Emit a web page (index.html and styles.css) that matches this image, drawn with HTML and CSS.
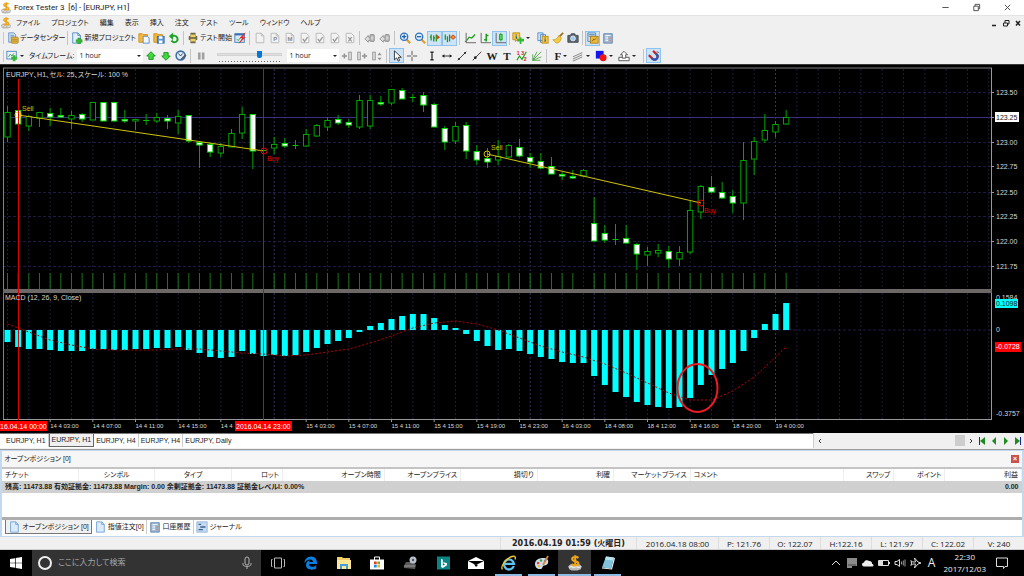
FILE: index.html
```html
<!DOCTYPE html>
<html lang="ja">
<head>
  <meta charset="UTF-8" />
  <meta name="viewport" content="width=device-width, initial-scale=1.0"/>
  <title>Forex Tester 3</title>
  <link rel="stylesheet" href="styles.css">
</head>
<body>

  <!-- Icones -->
  <svg class="sprite" aria-hidden="true">
    <symbol id="i-logo" viewBox="0 0 14 14">
      <path d="M1 10l2-2h8l2 2-1 2.500-3 1H4l-2-1z" fill="#b9b9b9"/>
      <path d="M2 11l2-1 2 1 2-1 2 1 2-1" stroke="#eee" fill="none"/>
      <path d="M10 2.500C8 1 4.500 1.500 4.500 3.500c0 2.500 5.500 1.500 5.500 4 0 2-4 2.200-6 .500M7.200 .300v9.500" stroke="#eba51c" stroke-width="1.800" fill="none"/>
    </symbol>
    <symbol id="i-data" viewBox="0 0 14 14">
      <path d="M2 1h6l2 2v9H2z" fill="#cfe2f5" stroke="#5f8fc4"/>
      <path d="M4 4h4M4 6h4" stroke="#5f8fc4"/>
      <rect x="5" y="6" width="8" height="7" rx="1" fill="#f0c24a" stroke="#a97b17"/>
      <path d="M6 8.500h6M6 10.500h6" stroke="#a97b17"/>
    </symbol>
    <symbol id="i-newproj" viewBox="0 0 14 14">
      <path d="M2 1h6l3 3v9H2z" fill="#e3effb" stroke="#4a86c5"/>
      <path d="M8 1v3h3" fill="none" stroke="#4a86c5"/>
      <path d="M8 7h3v2h2v3h-2v2H8v-2H6V9h2z" fill="#35b835" stroke="#1c8a1c" stroke-width=".5"/>
    </symbol>
    <symbol id="i-open" viewBox="0 0 14 14">
      <path d="M1 2h4l1 1h5v9H1z" fill="#f6b93b" stroke="#cd8b16"/>
      <path d="M6 5h5l2 2v6H6z" fill="#f5f9ff" stroke="#4a86c5"/>
    </symbol>
    <symbol id="i-save" viewBox="0 0 14 14">
      <path d="M1 2h4l1 1h5v9H1z" fill="#f6b93b" stroke="#cd8b16"/>
      <rect x="5" y="5" width="8" height="8" fill="#5d97d6" stroke="#2f67a8"/>
      <path d="M7 5h4v3H7zM7 10h4v3H7z" fill="#fff"/>
    </symbol>
    <symbol id="i-undo" viewBox="0 0 14 14">
      <path d="M3.500 4.500h4.500a3.800 3.800 0 1 1-4 5.500" fill="none" stroke="#23a12c" stroke-width="2.300"/>
      <path d="M1 5l5-4.500v9z" fill="#23a12c"/>
    </symbol>
    <symbol id="i-gear" viewBox="0 0 14 14">
      <path d="M4 1h6v3l2 1v4l-2 1v3H4v-3L2 9V5l2-1z" fill="#6e6752"/>
      <rect x="4" y="3" width="6" height="3" fill="#ead25e"/>
      <rect x="4" y="8" width="6" height="3" fill="#ead25e"/>
    </symbol>
    <symbol id="i-test" viewBox="0 0 14 14">
      <rect x="1" y="2" width="11" height="10" fill="#dceaf8" stroke="#3770b4"/>
      <path d="M1 3h11" stroke="#3770b4" stroke-width="2"/>
      <path d="M3 8l2 2 3-4" stroke="#2a2" fill="none"/>
      <path d="M13 1L7 7h3l-4 6 7-7h-3l3-5z" fill="#e32020" stroke="#e32020" stroke-width=".6"/>
    </symbol>
    <symbol id="i-page" viewBox="0 0 14 14">
      <path d="M2.500 1.500h6l3 3v8h-9z" fill="#f3f3f3" stroke="#b4b4b4"/>
      <path d="M8.500 1.500v3h3" fill="none" stroke="#b4b4b4"/>
    </symbol>
    <symbol id="i-check" viewBox="0 0 14 14">
      <path d="M2.500 1.500h6l3 3v8h-9z" fill="#f3f3f3" stroke="#b4b4b4"/>
      <path d="M4.500 8l2 3 3.500-5" fill="none" stroke="#999" stroke-width="1.500"/>
    </symbol>
    <symbol id="i-cross" viewBox="0 0 14 14">
      <path d="M2.500 1.500h6l3 3v8h-9z" fill="#f3f3f3" stroke="#b4b4b4"/>
      <path d="M5 6l4 5M9 6l-4 5" stroke="#999" stroke-width="1.500"/>
    </symbol>
    <symbol id="i-calc" viewBox="0 0 14 14">
      <path d="M1 8l4-4v2h3v4H5v2z" fill="#ddd" stroke="#8f8f8f"/>
      <rect x="7" y="3" width="5" height="8" rx="1" fill="#b5b5b5" stroke="#8a8a8a"/>
      <path d="M8 6h3M8 8h3" stroke="#eee"/>
    </symbol>
    <symbol id="i-zoomin" viewBox="0 0 14 14">
      <path d="M8 8l5 5" stroke="#e09a2c" stroke-width="2.500"/>
      <circle cx="6" cy="5.500" r="4.200" fill="#e2f0fd" stroke="#2b73c0" stroke-width="1.500"/>
      <path d="M3.500 5.500h5M6 3v5" stroke="#1b5ea8" stroke-width="1.500"/>
    </symbol>
    <symbol id="i-zoomout" viewBox="0 0 14 14">
      <path d="M8 8l5 5" stroke="#e09a2c" stroke-width="2.500"/>
      <circle cx="6" cy="5.500" r="4.200" fill="#e2f0fd" stroke="#2b73c0" stroke-width="1.500"/>
      <path d="M3.500 5.500h5" stroke="#1b5ea8" stroke-width="1.500"/>
    </symbol>
    <symbol id="i-scroll" viewBox="0 0 14 14">
      <path d="M2.500 3v7M5.500 4v7M8.500 3v8M1 6h1.500M5.500 7H7" stroke="#189a18" stroke-width="1.500"/>
      <path d="M9 3l4 3-4 3z" fill="#e8401c"/>
    </symbol>
    <symbol id="i-shift" viewBox="0 0 14 14">
      <path d="M1.500 3v6M4 5v7M6.500 3v8" stroke="#189a18" stroke-width="1.500"/>
      <path d="M7 6h7M10.500 3v6" stroke="#d8401c"/>
      <circle cx="10.500" cy="6" r="2" fill="#f39a1e" stroke="#d8401c"/>
    </symbol>
    <symbol id="i-line" viewBox="0 0 14 14">
      <path d="M2.500 1v11.500H14M1 11h2" stroke="#555" fill="none"/>
      <path d="M3 10l3-4 3 1 4-4" stroke="#1aa01a" stroke-width="1.500" fill="none"/>
    </symbol>
    <symbol id="i-bars" viewBox="0 0 14 14">
      <path d="M2.500 1v11.500H14" stroke="#555" fill="none"/>
      <path d="M8.500 2v9M6 9h2.500M8.500 4H11" stroke="#1aa01a" stroke-width="1.800"/>
    </symbol>
    <symbol id="i-candle" viewBox="0 0 14 14">
      <path d="M2.500 1v11.500H14" stroke="#555" fill="none"/>
      <path d="M8 1v10" stroke="#1aa01a"/>
      <rect x="6.500" y="3" width="3" height="6" fill="#4fdd4f" stroke="#1aa01a"/>
    </symbol>
    <symbol id="i-addind" viewBox="0 0 14 14">
      <path d="M1 1h8v8H6l-2 2V9H1z" fill="#f8c940" stroke="#b98915"/>
      <path d="M5 3v1M5 5v3" stroke="#225a9d" stroke-width="1.500"/>
      <path d="M9 6h2v2h3v3h-3v3H9v-3H6V8h3z" fill="#35b835"/>
    </symbol>
    <symbol id="i-objs" viewBox="0 0 14 14">
      <path d="M1 1h6v9H1zM4 3h6v9H4z" fill="#dceafa" stroke="#4a86c5"/>
      <rect x="6" y="5" width="7" height="8" fill="#f8c940" stroke="#b98915"/>
      <path d="M9.500 6.500v1M9.500 8.500v3" stroke="#225a9d" stroke-width="1.500"/>
    </symbol>
    <symbol id="i-broom" viewBox="0 0 14 14">
      <path d="M8 6l5-5" stroke="#9b6a1a" stroke-width="1.800"/>
      <path d="M8 4l3 3c-1 4-3 6-6 6L1 9c3 0 5-1 7-5z" fill="#f3cb43" stroke="#b98915" stroke-width=".7"/>
    </symbol>
    <symbol id="i-camera" viewBox="0 0 14 14">
      <path d="M1 4h3l1-2h4l1 2h3v8H1z" fill="#5d6873" stroke="#39424a"/>
      <circle cx="7" cy="7.500" r="2.800" fill="#9fc9ee" stroke="#eee"/>
    </symbol>
    <symbol id="i-panel" viewBox="0 0 14 14">
      <path d="M1 1h9v10H1z" fill="#cfe0f2" stroke="#4a86c5"/>
      <path d="M2 3h7M2 5h7" stroke="#4a86c5"/>
      <rect x="4" y="5" width="9" height="8" fill="#f0bc3a" stroke="#a97b17"/>
      <path d="M6 11l2-3 1 1 2-2" stroke="#735010" fill="none"/>
    </symbol>
    <symbol id="i-list" viewBox="0 0 14 14">
      <path d="M2 2h10v11H2z" fill="#9fb9d4" stroke="#5c82ab"/>
      <path d="M4 4h6M4 6h3M4 8h3M4 10h3" stroke="#fff"/>
      <path d="M9.500 6v6" stroke="#e57d4b" stroke-width="1.500" stroke-dasharray="2 1"/>
    </symbol>
    <symbol id="i-chartadd" viewBox="0 0 14 14">
      <rect x="1" y="1.500" width="11" height="9" fill="#e9f2fb" stroke="#4a7fb8"/>
      <path d="M3 8l2-3 2 2 2-3" stroke="#2a9a2a" fill="none"/>
      <path d="M8 6h3v2h2v3h-2v2H8v-2H6V8h2z" fill="#35b835"/>
    </symbol>
    <symbol id="i-up" viewBox="0 0 14 14">
      <path d="M7 2l5 5H9.500v4h-5V7H2z" fill="#3edb3e" stroke="#178c17"/>
    </symbol>
    <symbol id="i-down" viewBox="0 0 14 14">
      <path d="M7 12L2 7h2.500V3h5v4H12z" fill="#3edb3e" stroke="#178c17"/>
    </symbol>
    <symbol id="i-clock" viewBox="0 0 14 14">
      <circle cx="6.500" cy="6.500" r="5.200" fill="#dcecfb" stroke="#3b6ea7" stroke-width="1.800"/>
      <path d="M4 4l2.500 3L9 4" stroke="#333" fill="none"/>
      <path d="M7 10l5-5 1.500 1.500-5 5-2 .500z" fill="#4c5d70"/>
    </symbol>
    <symbol id="i-pause" viewBox="0 0 14 14">
      <path d="M3.500 3h3v8h-3zM8 3h3v8H8z" fill="#a0a0a0"/>
    </symbol>
    <symbol id="i-stepin" viewBox="0 0 14 14">
      <path d="M1 7h6M4 4v6" stroke="#949494" stroke-width="1.800"/>
      <rect x="9" y="2.500" width="3" height="9" fill="#ddd" stroke="#949494"/>
    </symbol>
    <symbol id="i-stepout" viewBox="0 0 14 14">
      <rect x="2" y="2.500" width="3" height="9" fill="#ddd" stroke="#949494"/>
      <path d="M7 7h6M10 4v6" stroke="#949494" stroke-width="1.800"/>
    </symbol>
    <symbol id="i-stepv" viewBox="0 0 14 14">
      <rect x="2" y="2.500" width="3" height="9" fill="#ddd" stroke="#949494"/>
      <path d="M10 3l2.500 3h-5zM10 12l2.500-3h-5z" fill="#949494"/>
    </symbol>
    <symbol id="i-cursor" viewBox="0 0 14 14">
      <path d="M4 1v10.500l2.500-2.300L8.500 13l1.500-.800L8.500 8.500H12z" fill="#fff" stroke="#222"/>
    </symbol>
    <symbol id="i-plus" viewBox="0 0 14 14">
      <path d="M7 1v5M7 8v5M1 7h5M8 7h5" stroke="#444"/>
    </symbol>
    <symbol id="i-vline" viewBox="0 0 14 14">
      <path d="M7 2.500v9M5 2.500h4M5 11.500h4" stroke="#222" stroke-width="1.400"/>
    </symbol>
    <symbol id="i-hline" viewBox="0 0 14 14">
      <path d="M2 7h10" stroke="#222"/><path d="M1 7l3-2v4zM13 7l-3-2v4z" fill="#222"/>
    </symbol>
    <symbol id="i-ray" viewBox="0 0 14 14">
      <path d="M2 12L12 2" stroke="#222"/><circle cx="3.500" cy="10.500" r="1.200" fill="#222"/><circle cx="10.500" cy="3.500" r="1.200" fill="#222"/>
    </symbol>
    <symbol id="i-seg" viewBox="0 0 14 14">
      <path d="M2 12L12 2" stroke="#222"/><circle cx="5" cy="9" r="1.600" fill="#222"/>
    </symbol>
    <symbol id="i-fan" viewBox="0 0 14 14">
      <path d="M2 12V5M2 12L7 2M2 12L12 2M2 12l10-4M2 12h9" stroke="#4ba54b" fill="none"/>
    </symbol>
    <symbol id="i-channel" viewBox="0 0 14 14">
      <path d="M1 8l11-5M1 10.500l11-5M1 13l11-5" stroke="#777"/>
    </symbol>
    <symbol id="i-shape" viewBox="0 0 14 14">
      <rect x="1" y="1" width="9" height="9" fill="#1414f0"/><circle cx="9.500" cy="9" r="4" fill="#f01414"/>
    </symbol>
    <symbol id="i-upload" viewBox="0 0 14 14">
      <path d="M1 8.500h12v4H1z" fill="#fff" stroke="#444"/>
      <path d="M7 1.500l4 4H9v4H5v-4H3z" fill="#fff" stroke="#444"/>
    </symbol>
    <symbol id="i-magnet" viewBox="0 0 14 14">
      <g transform="rotate(-45 7 7)">
        <path d="M3.500 2v6a3.500 3.500 0 0 0 7 0V2" fill="none" stroke="#cc2222" stroke-width="2.600"/>
        <path d="M3.500 7v1a3.500 3.500 0 0 0 7 0V7" fill="none" stroke="#2c58b8" stroke-width="2.600"/>
      </g>
      <path d="M10 2l3 1M11 6l2 1" stroke="#555"/>
    </symbol>
    <symbol id="i-doc" viewBox="0 0 14 14">
      <path d="M3 1h6l3 3v9H3z" fill="#dcebfa" stroke="#6c9fd4"/><path d="M9 1v3h3" fill="none" stroke="#6c9fd4"/>
    </symbol>
    <symbol id="i-journal" viewBox="0 0 14 14">
      <rect x="1" y="1" width="12" height="12" fill="#c6dbf0" stroke="#8db3da"/>
      <path d="M3 4h3M5 7h6M3 10h5" stroke="#39618c" stroke-width="1.500"/>
    </symbol>
  </svg>

  <header class="titlebar">
    <svg class="ico"><use href="#i-logo"/></svg>
    <h1>Forex Tester 3&nbsp; [6] - [EURJPY, H1]</h1>
    <div class="window-buttons">
      <button aria-label="最小化"><svg viewBox="0 0 10 10"><path d="M1.500 5h7" stroke="#444"/></svg></button>
      <button aria-label="元に戻す"><svg viewBox="0 0 10 10"><path d="M2 3.500h5v5H2zM3.500 3.500v-2h5v5H7" fill="none" stroke="#444"/></svg></button>
      <button aria-label="閉じる"><svg viewBox="0 0 10 10"><path d="M2 2l6 6M8 2l-6 6" stroke="#444"/></svg></button>
    </div>
  </header>

  <nav class="menubar">
    <svg class="ico"><use href="#i-logo"/></svg>
    <button>ファイル</button>
    <button>プロジェクト</button>
    <button>編集</button>
    <button>表示</button>
    <button>挿入</button>
    <button>注文</button>
    <button>テスト</button>
    <button>ツール</button>
    <button>ウィンドウ</button>
    <button>ヘルプ</button>
    <div class="mdi-buttons">
      <button aria-label="子を最小化"><svg viewBox="0 0 8 8"><path d="M2 6.500h4" stroke="#222" stroke-width="1.500"/></svg></button>
      <button aria-label="子を元に戻す"><svg viewBox="0 0 8 8"><path d="M1.500 4h4v3h-4zM3 4V1.500h4V5H5.500" fill="none" stroke="#222"/></svg></button>
      <button aria-label="子を閉じる"><svg viewBox="0 0 8 8"><path d="M2 2l4 4.500M6 2L2 6.500" stroke="#222" stroke-width="1.500"/></svg></button>
    </div>
  </nav>

  <div class="toolbar">
    <span class="grip"></span>
    <button class="labelled"><svg class="ico"><use href="#i-data"/></svg>データセンター</button>
    <span class="sep"></span>
    <button class="labelled"><svg class="ico"><use href="#i-newproj"/></svg>新規プロジェクト</button>
    <button class="tool" aria-label="開く"><svg class="ico"><use href="#i-open"/></svg></button>
    <button class="tool" aria-label="保存"><svg class="ico"><use href="#i-save"/></svg></button>
    <button class="tool" aria-label="更新"><svg class="ico"><use href="#i-undo"/></svg></button>
    <span class="sep"></span>
    <button class="labelled"><svg class="ico"><use href="#i-gear"/></svg>テスト開始</button>
    <button class="tool" aria-label="テスト"><svg class="ico"><use href="#i-test"/></svg></button>
    <span class="sep"></span>
    <button class="tool" aria-label="新規注文"><svg class="ico"><use href="#i-page"/></svg></button>
    <button class="tool" aria-label="指値"><svg class="ico" viewBox="0 0 14 14"><use href="#i-page"/><text x="5" y="11" class="page-letter">P</text></svg></button>
    <button class="tool" aria-label="成行"><svg class="ico" viewBox="0 0 14 14"><use href="#i-page"/><text x="4" y="11" class="page-letter">M</text></svg></button>
    <button class="tool" aria-label="変更"><svg class="ico"><use href="#i-check"/></svg></button>
    <button class="tool" aria-label="一部決済"><svg class="ico"><use href="#i-check"/></svg></button>
    <button class="tool" aria-label="決済"><svg class="ico"><use href="#i-check"/></svg></button>
    <button class="tool" aria-label="取消"><svg class="ico"><use href="#i-cross"/></svg></button>
    <span class="sep"></span>
    <button class="tool" aria-label="前へ"><svg class="ico"><use href="#i-calc"/></svg></button>
    <button class="tool" aria-label="全て前へ"><svg class="ico"><use href="#i-calc"/></svg></button>
    <span class="sep"></span>
    <button class="tool" aria-label="拡大"><svg class="ico"><use href="#i-zoomin"/></svg></button>
    <button class="tool" aria-label="縮小"><svg class="ico"><use href="#i-zoomout"/></svg></button>
    <button class="tool on" aria-label="自動スクロール"><svg class="ico"><use href="#i-scroll"/></svg></button>
    <button class="tool on" aria-label="チャートシフト"><svg class="ico"><use href="#i-shift"/></svg></button>
    <span class="sep"></span>
    <button class="tool" aria-label="ライン"><svg class="ico"><use href="#i-line"/></svg></button>
    <button class="tool" aria-label="バー"><svg class="ico"><use href="#i-bars"/></svg></button>
    <button class="tool on" aria-label="ローソク足"><svg class="ico"><use href="#i-candle"/></svg></button>
    <span class="sep"></span>
    <button class="tool drop" aria-label="インジケーター追加"><svg class="ico"><use href="#i-addind"/></svg></button>
    <button class="tool" aria-label="インジケーター一覧"><svg class="ico"><use href="#i-objs"/></svg></button>
    <button class="tool" aria-label="消去"><svg class="ico"><use href="#i-broom"/></svg></button>
    <button class="tool" aria-label="画像保存"><svg class="ico"><use href="#i-camera"/></svg></button>
    <span class="sep"></span>
    <button class="tool on" aria-label="パネル"><svg class="ico"><use href="#i-panel"/></svg></button>
    <button class="tool" aria-label="リスト"><svg class="ico"><use href="#i-list"/></svg></button>
  </div>

  <div class="toolbar">
    <span class="grip"></span>
    <button class="tool drop" aria-label="チャート追加"><svg class="ico"><use href="#i-chartadd"/></svg></button>
    <label class="tf-label" for="timeframe">タイムフレーム:</label>
    <span class="select-box wide"><select id="timeframe"><option>1 hour</option><option>4 hours</option><option>Daily</option></select></span>
    <button class="tool" aria-label="上げる"><svg class="ico"><use href="#i-up"/></svg></button>
    <button class="tool" aria-label="下げる"><svg class="ico"><use href="#i-down"/></svg></button>
    <button class="tool" aria-label="時間"><svg class="ico"><use href="#i-clock"/></svg></button>
    <span class="sep"></span>
    <button class="tool" aria-label="一時停止"><svg class="ico"><use href="#i-pause"/></svg></button>
    <span class="speed"><input type="range" min="0" max="100" value="67" aria-label="速度"></span>
    <span class="select-box"><select aria-label="ステップ"><option>1 hour</option><option>4 hours</option></select></span>
    <button class="tool" aria-label="戻る"><svg class="ico"><use href="#i-stepin"/></svg></button>
    <button class="tool" aria-label="進む"><svg class="ico"><use href="#i-stepout"/></svg></button>
    <button class="tool" aria-label="縦幅"><svg class="ico"><use href="#i-stepv"/></svg></button>
    <span class="sep"></span>
    <button class="tool on" aria-label="カーソル"><svg class="ico"><use href="#i-cursor"/></svg></button>
    <button class="tool" aria-label="十字線"><svg class="ico"><use href="#i-plus"/></svg></button>
    <span class="sep blank"></span>
    <button class="tool" aria-label="垂直線"><svg class="ico"><use href="#i-vline"/></svg></button>
    <button class="tool" aria-label="水平線"><svg class="ico"><use href="#i-hline"/></svg></button>
    <button class="tool" aria-label="半直線"><svg class="ico"><use href="#i-ray"/></svg></button>
    <button class="tool" aria-label="線分"><svg class="ico"><use href="#i-seg"/></svg></button>
    <button class="tool letter">W</button>
    <button class="tool letter">T</button>
    <button class="tool" aria-label="波動">
      <svg class="ico" viewBox="0 0 14 14">
        <path d="M1 12l3-5 3 4 5-9" stroke="#1aa01a" stroke-width="1.400" fill="none"/>
        <text x="1" y="6" class="wave-num">1</text>
        <text x="6" y="6" class="wave-num">3</text>
        <text x="9" y="13" class="wave-num">2</text>
      </svg>
    </button>
    <button class="tool" aria-label="ファン"><svg class="ico"><use href="#i-fan"/></svg></button>
    <span class="sep"></span>
    <button class="tool letter drop">F</button>
    <button class="tool drop" aria-label="チャネル"><svg class="ico"><use href="#i-channel"/></svg></button>
    <button class="tool drop" aria-label="図形"><svg class="ico"><use href="#i-shape"/></svg></button>
    <button class="tool drop" aria-label="出力"><svg class="ico"><use href="#i-upload"/></svg></button>
    <span class="sep"></span>
    <button class="tool on" aria-label="マグネット"><svg class="ico"><use href="#i-magnet"/></svg></button>
  </div>

  <main>
    <svg class="chart" id="chart" viewBox="0 0 1024 369"></svg>

    <div class="chart-tabs">
      <div class="tabs">
        <button>EURJPY, H1</button>
        <button class="current">EURJPY, H1</button>
        <button>EURJPY, H4</button>
        <button>EURJPY, H4</button>
        <button>EURJPY, Daily</button>
      </div>
      <div class="scroller">
        <button aria-label="左へ"><svg viewBox="0 0 8 8"><path d="M5 2L3 4l2 2" fill="none" stroke="#333"/></svg></button>
        <span class="track"><span class="thumb"></span></span>
        <button aria-label="右へ"><svg viewBox="0 0 8 8"><path d="M3 2l2 2-2 2" fill="none" stroke="#333"/></svg></button>
      </div>
      <div class="jump">
        <button aria-label="最初"><svg viewBox="0 0 8 8"><path d="M1.500 0v8" stroke="#22229a"/><path d="M7 0v8L2 4z" fill="#1f8a1f"/></svg></button>
        <button aria-label="前"><svg viewBox="0 0 8 8"><path d="M6 0v8L2 4z" fill="#1f8a1f"/></svg></button>
        <button aria-label="次"><svg viewBox="0 0 8 8"><path d="M2 0v8l4-4z" fill="#1f8a1f"/></svg></button>
        <button aria-label="最後"><svg viewBox="0 0 8 8"><path d="M6.500 0v8" stroke="#22229a"/><path d="M1 0v8l5-4z" fill="#1f8a1f"/></svg></button>
      </div>
    </div>
  </main>

  <section class="dock">
    <div class="dock-head">
      <h2>オープンポジション [0]</h2>
      <button class="dock-close" aria-label="閉じる">×</button>
    </div>
    <div class="positions">
      <table>
        <colgroup>
          <col class="c-md"><col class="c-md"><col class="c-md"><col class="c-sm"><col class="c-lg">
          <col class="c-md"><col class="c-md"><col class="c-md"><col class="c-md"><col class="c-xl">
          <col class="c-sm"><col class="c-sm"><col class="c-md">
        </colgroup>
        <thead>
          <tr>
            <th class="left">チケット</th>
            <th class="center">シンボル</th>
            <th class="center">タイプ</th>
            <th>ロット</th>
            <th>オープン時間</th>
            <th>オープンプライス</th>
            <th>損切り</th>
            <th>利確</th>
            <th>マーケットプライス</th>
            <th class="left">コメント</th>
            <th>スワップ</th>
            <th>ポイント</th>
            <th>利益</th>
          </tr>
        </thead>
        <tbody>
          <tr>
            <td colspan="12" class="left">残高: 11473.88 有効証拠金: 11473.88 Margin: 0.00 余剰証拠金: 11473.88 証拠金レベルl: 0.00%</td>
            <td>0.00</td>
          </tr>
        </tbody>
      </table>
    </div>
    <div class="dock-tabs">
      <button class="current"><svg class="ico"><use href="#i-doc"/></svg>オープンポジション [0]</button>
      <button><svg class="ico"><use href="#i-doc"/></svg>指値注文[0]</button>
      <button><svg class="ico"><use href="#i-list"/></svg>口座履歴</button>
      <button><svg class="ico"><use href="#i-journal"/></svg>ジャーナル</button>
    </div>
  </section>

  <footer class="statusbar">
    <span class="now">2016.04.19 01:59 (火曜日)</span>
    <span class="bar-time">2016.04.18 08:00</span>
    <span>P: 121.76</span>
    <span>O: 122.07</span>
    <span>H:122.16</span>
    <span>L: 121.97</span>
    <span>C: 122.02</span>
    <span>V: 240</span>
  </footer>

  <div class="taskbar">
    <button class="start" aria-label="スタート"><svg viewBox="0 0 12 12"><path d="M0 2l5-.800V5.700H0zM5.700 1.100L12 0v5.700H5.700zM0 6.300h5v4.500L0 10zM5.700 6.300H12V12l-6.300-1.100z" fill="#fff"/></svg></button>
    <div class="search">
      <svg class="cortana" viewBox="0 0 16 16"><circle cx="8" cy="8" r="6" fill="none" stroke="#eee" stroke-width="2"/></svg>
      <input type="text" placeholder="ここに入力して検索" aria-label="検索">
      <svg class="mic" viewBox="0 0 12 14"><rect x="4" y="1" width="4" height="8" rx="2" fill="none" stroke="#b5b5b5"/><path d="M2 7v1.500C2 11 10 11 10 8.500V7M6 10.500V13" fill="none" stroke="#b5b5b5"/></svg>
    </div>
    <button class="app" aria-label="タスクビュー"><svg viewBox="0 0 16 16"><path d="M4.500 3h7v10h-7zM2.500 4.500h-1v7h1M13.500 4.500h1v7h-1" fill="none" stroke="#bbb"/></svg></button>
    <button class="app" aria-label="Edge"><svg viewBox="0 0 16 16"><path d="M3 9h11c.5-4-2-7.500-6-7.500S1.500 4.500 1.500 8C3 5.500 5 4.500 7 4.500 9 4.500 10 5.500 10 7H6c.3-1 .8-1.600 1.500-2C4.500 5.500 3 7.500 3 10c0 3 2.500 4.700 5.500 4.700 2 0 3.500-.4 4.700-1.200V10.300C12 11.300 10.500 11.800 9 11.800c-2 0-3-1-3-2.800z" fill="#0b7fe0"/></svg></button>
    <button class="app" aria-label="エクスプローラー"><svg viewBox="0 0 16 16"><path d="M1 2h5l1 1h7v10H1z" fill="#f4cf63"/><path d="M1 5h14v9H1z" fill="#ffe694"/><path d="M4 14V9h8v5h-2v-3H6v3z" fill="#3f9fe0"/></svg></button>
    <button class="app" aria-label="ストア"><svg viewBox="0 0 16 16"><path d="M5.500 5V2h5v3" fill="none" stroke="#fff"/><path d="M1 4.500h14v10H1z" fill="#fff"/><path d="M5 6.500h2.700v2.700H5z" fill="#e33c1e"/><path d="M8.300 6.500H11v2.700H8.300z" fill="#6fb52c"/><path d="M5 9.800h2.700v2.700H5z" fill="#1d8fe1"/><path d="M8.300 9.800H11v2.700H8.300z" fill="#f7b617"/></svg></button>
    <button class="app" aria-label="ドライブ"><svg viewBox="0 0 16 16"><path d="M4 7h8l2 3-1 4-11-1v-2z" fill="#5b5b5b"/><path d="M2 11h11" stroke="#999"/><circle cx="11" cy="5" r="3.500" fill="#b9bfcc"/><circle cx="11" cy="5" r="1.200" fill="#555"/></svg></button>
    <button class="app" aria-label="Bing"><svg viewBox="0 0 16 16"><rect x="2" y="1.500" width="13" height="13" fill="#0c8484"/><path d="M6 4l1.800.6v6.200l2.500-1.500-1.500-.6-.8-1.800 4 1.400v2L7.800 13 6 12z" fill="#fff"/></svg></button>
    <button class="app" aria-label="メール"><svg viewBox="0 0 16 16"><path d="M0 6l8-4 8 4v8H0z" fill="#fff"/><path d="M0 6h16L8 10z" fill="#000"/><path d="M6 9l4 1-2 2z" fill="#000"/></svg></button>
    <button class="app open" aria-label="Internet Explorer"><svg viewBox="0 0 16 16"><path d="M3 8.800h8.500M12.800 11a5 5 0 1 1 .2-2.200H5" fill="none" stroke="#5cc3f2" stroke-width="2.300"/><path d="M1.500 14.500C-1 12 5 3 11 1.500c3-.8 4 .5 3 3" fill="none" stroke="#f5c62c" stroke-width="1.300"/></svg></button>
    <button class="app open" aria-label="ペイント"><svg viewBox="0 0 16 16"><path d="M1 9c0-4 4-6 8-6s6 2 5 5-4 2-5 3 0 3-3 3-5-2-5-5z" fill="#cfdced"/><circle cx="4" cy="8" r="1.200" fill="#e33"/><circle cx="7" cy="5.500" r="1.200" fill="#3a3"/><circle cx="11" cy="6" r="1.200" fill="#36d"/><circle cx="5" cy="11" r="1.200" fill="#eb2"/><path d="M14 1L9 10" stroke="#d0863a" stroke-width="1.800"/></svg></button>
    <button class="app open active" aria-label="Forex Tester"><svg><use href="#i-logo"/></svg></button>
    <button class="app open" aria-label="メモ帳"><svg viewBox="0 0 16 16"><path d="M6 1.500l8 1-3 11-9-1z" fill="#7fc4dc"/><path d="M6 1.500l8 1-1 3-8-1z" fill="#b9e2f0"/><path d="M14 2.500l1 1-3 11-10-1v-1l9 1z" fill="#e9eef2"/></svg></button>
    <div class="tray">
      <svg viewBox="0 0 12 12"><path d="M2 8l4-4 4 4" fill="none" stroke="#ddd"/></svg>
      <svg viewBox="0 0 12 12"><path d="M1 1h10v8H6v2H1z" fill="#8a8a8a"/><path d="M2 8h8" stroke="#444"/></svg>
      <svg viewBox="0 0 12 12"><path d="M2 9.500a2 2 0 0 1 0-4A3 3 0 0 1 7 4a2.500 2.500 0 0 1 3 3c2 0 2 2.500 0 2.500z" fill="#eee"/></svg>
      <svg viewBox="0 0 12 12"><path d="M.5 3.500h10v5H.5zM11.500 5v2" fill="none" stroke="#ddd"/><path d="M1 4h4v4H1z" fill="#ddd"/></svg>
      <svg viewBox="0 0 12 12"><path d="M1 4.500h2l2.500-2v7L3 7.500H1z" fill="none" stroke="#ddd"/><path d="M7.500 4.500v3M9.300 3.500v5M11 2.500v7" stroke="#999"/></svg>
      <svg viewBox="0 0 12 12"><path d="M1 3.500l1.500 1.500h3L4.500 1 8 5l3 1-3 1-3.500 4 1-4h-3L1 8.500 1.500 6z" fill="none" stroke="#ddd"/></svg>
      <span class="ime">A</span>
      <time class="clock">22:30<br>2017/12/03</time>
      <button aria-label="通知"><svg viewBox="0 0 14 14"><path d="M1.500 2h11v8.500H10l-1.500 2v-2h-7z" fill="none" stroke="#ddd"/></svg></button>
    </div>
  </div>

  <script src="chart.js"></script>
</body>
</html>
```

FILE: styles.css
```css
* {
  margin: 0;
  padding: 0;
  box-sizing: border-box;
}

body {
  min-height: 100vh;
  display: flex;
  flex-direction: column;
  background-color: #f0f0f0;
  color: #222;
  font-family: 'Liberation Sans', 'Noto Sans CJK JP', sans-serif;
  font-size: 7px;
  line-height: 10px;
  font-feature-settings: 'palt';
}

button,
input,
select {
  font: inherit;
  font-feature-settings: inherit;
  color: inherit;
  background: none;
  border: none;
  white-space: nowrap;
}

svg {
  display: block;
  flex: none;
}

.sprite {
  position: absolute;
  width: 0;
  height: 0;
}

.ico {
  width: 12px;
  height: 12px;
}

/* Barre de titre */
.titlebar {
  display: flex;
  align-items: center;
  gap: 2px;
  height: 15px;
  background-color: #fff;
}

.titlebar h1 {
  flex: 1;
  font-family: Roboto, sans-serif;
  font-size: 8px;
  font-weight: normal;
}

.window-buttons {
  display: flex;
  padding-right: 1px;
}

.window-buttons button {
  width: 31px;
  display: flex;
  justify-content: center;
}

.window-buttons svg {
  width: 9px;
  height: 9px;
}

/* Menu */
.menubar {
  display: flex;
  align-items: center;
  gap: 11px;
  height: 14px;
  border-top: 1px solid #e4e4e4;
}

.menubar .ico {
  margin-right: -7px;
}

.mdi-buttons {
  display: flex;
  gap: 4px;
  margin-left: auto;
  padding-right: 2px;
}

.mdi-buttons svg {
  width: 8px;
  height: 8px;
}

/* Barres d'outils */
.toolbar {
  display: flex;
  align-items: center;
  height: 18px;
}

.toolbar + .toolbar {
  height: 17px;
}

.grip {
  width: 1px;
  height: 12px;
  margin: 0 2px 0 3px;
  background-color: #c8c8c8;
}

.sep {
  width: 1px;
  height: 14px;
  margin: 0 2px;
  background-color: #c4c4c4;
}

.sep.blank {
  background: none;
}

.labelled {
  display: flex;
  align-items: center;
  gap: 1px;
  padding-left: 1px;
}

.tool {
  display: flex;
  align-items: center;
  justify-content: center;
  width: 15px;
  height: 15px;
}

.tool.on {
  background-color: #cde4f7;
  border: 1px solid #8fc3ee;
}

.tool.drop {
  width: 23px;
  justify-content: flex-start;
  gap: 2px;
}

.tool.drop::after,
.select-box::after {
  content: '';
  border: 2px solid transparent;
  border-top-color: #222;
  border-bottom: none;
}

.letter {
  font-family: 'Liberation Serif', serif;
  font-size: 11px;
  font-weight: bold;
}

.letter.drop {
  padding-left: 5px;
}

.page-letter {
  font: bold 7px 'Liberation Sans', sans-serif;
  fill: #888;
}

.wave-num {
  font: bold 6px 'Liberation Sans', sans-serif;
  fill: #e01818;
}

.tf-label {
  padding-right: 3px;
}

.select-box {
  display: flex;
  align-items: center;
  width: 52px;
  height: 13px;
  padding-right: 2px;
  background-color: #fff;
}

.select-box.wide {
  width: 66px;
}

.select-box select {
  flex: 1;
  appearance: none;
  padding-left: 2px;
  font-family: 'Open Sans', sans-serif;
  outline: none;
}

.speed {
  width: 79px;
  padding: 0 5px 0 9px;
}

.speed input {
  display: block;
  width: 100%;
  height: 13px;
  appearance: none;
  background: repeating-linear-gradient(to right, #666 0 1px, transparent 1px 3px) center bottom / 62px 1px no-repeat;
}

.speed input::-webkit-slider-runnable-track {
  height: 3px;
  margin-bottom: 3px;
  background-color: #e0e0e0;
  border: 1px solid #d2d2d2;
}

.speed input::-webkit-slider-thumb {
  appearance: none;
  width: 5px;
  height: 7px;
  margin-top: -3px;
  background-color: #0078d7;
  border-radius: 0 0 2px 2px;
}

/* Graphique */
.chart {
  width: 100%;
  height: auto;
  background-color: #000;
  font-family: 'Liberation Sans', 'Noto Sans CJK JP', sans-serif;
  font-size: 7px;
}

.chart text {
  fill: #d8d8d8;
}

.chart .time {
  font-size: 6px;
}

.chart .sell {
  fill: #d0c400;
}

.chart .buy {
  fill: #e00000;
}

.chart .dark {
  fill: #111;
}

.chart .light {
  fill: #fff;
}

.chart-tabs {
  display: flex;
  height: 17px;
  padding-bottom: 1px;
  border-bottom: 1px solid #9a9a9a;
}

.tabs {
  flex: 1;
  display: flex;
  align-items: flex-start;
  padding-left: 4px;
  background-color: #fff;
  border-top: 1px solid #777;
}

.tabs button {
  height: 13px;
  padding: 0 2px;
  border-right: 1px solid #ccc;
}

.tabs button:last-child {
  border-right: none;
}

.tabs button.current {
  background-color: #f0f0f0;
  border: 1px solid #666;
  border-top: none;
}

.scroller {
  display: flex;
  align-items: center;
  width: 16%;
  border-left: 1px solid #ccc;
}

.scroller button {
  width: 12px;
  display: flex;
  justify-content: center;
}

.scroller svg {
  width: 8px;
  height: 8px;
}

.track {
  flex: 1;
  display: flex;
  justify-content: flex-end;
}

.thumb {
  width: 10px;
  height: 11px;
  background-color: #cdcdcd;
}

.jump {
  display: flex;
  align-items: center;
  gap: 4px;
  padding: 0 2px 0 1px;
}

.jump svg {
  width: 8px;
  height: 8px;
}

/* Positions ouvertes */
.dock {
  flex: 1;
  display: flex;
  flex-direction: column;
  border: 1px solid #c3d9ee;
  border-width: 1px 2px;
  background-color: #fff;
}

.dock-head {
  display: flex;
  align-items: center;
  justify-content: space-between;
  height: 16px;
  padding: 0 3px 0 2px;
  background-color: #f6f6f6;
}

.dock-head h2 {
  font-size: 7px;
  font-weight: normal;
}

.dock-close {
  width: 8px;
  height: 8px;
  line-height: 8px;
  background-color: #c75050;
  color: #fff;
  font-weight: bold;
}

.positions {
  flex: 1;
  border-top: 2px solid #c4c4c4;
  border-bottom: 3px solid #adadad;
}

table {
  width: 100%;
  table-layout: fixed;
  border-collapse: collapse;
}

.c-sm { width: 5%; }
.c-md { width: 7.5%; }
.c-lg { width: 10%; }
.c-xl { width: 15%; }

th,
td {
  height: 12px;
  padding: 0 3px;
  text-align: right;
  white-space: nowrap;
}

th {
  font-weight: normal;
  border-right: 1px solid #eee;
}

td {
  background-color: #d0d0d0;
  font-weight: bold;
}

.left {
  text-align: left;
}

.center {
  text-align: center;
}

.dock-tabs {
  display: flex;
  align-items: flex-start;
  height: 16px;
  padding-left: 3px;
}

.dock-tabs button {
  display: flex;
  align-items: center;
  gap: 2px;
  height: 14px;
  padding: 0 2px;
  border-right: 1px solid #ccc;
}

.dock-tabs button.current {
  background-color: #f0f0f0;
  border: 1px solid #777;
  border-top: none;
}

.dock-tabs button:last-child {
  border-right: none;
}

/* Barre d'état */
.statusbar {
  display: flex;
  justify-content: flex-end;
  height: 13px;
  border-bottom: 1px solid #d0d0d0;
  font-family: 'Open Sans', 'Noto Sans CJK JP', sans-serif;
  font-size: 8px;
  line-height: 13px;
}

.statusbar span {
  width: 51px;
  border-left: 1px solid #ddd;
  text-align: center;
}

.statusbar .now {
  width: 136px;
  font-family: 'DejaVu Sans', 'Noto Sans CJK JP', sans-serif;
  font-weight: bold;
}

.statusbar .bar-time {
  width: 82px;
}

/* Barre des tâches */
.taskbar {
  display: flex;
  height: 26px;
  background-color: #000;
  color: #eee;
}

.start {
  width: 32px;
  display: flex;
  align-items: center;
  justify-content: center;
}

.start svg {
  width: 12px;
  height: 12px;
}

.search {
  display: flex;
  align-items: center;
  gap: 5px;
  width: 229px;
  padding: 0 8px 0 5px;
  background-color: #333;
}

.search input {
  flex: 1;
  min-width: 0;
  font-size: 8px;
  outline: none;
}

.search input::placeholder {
  color: #a5a5a5;
}

.cortana {
  width: 16px;
  height: 16px;
}

.mic {
  width: 12px;
  height: 14px;
}

.app {
  display: flex;
  align-items: center;
  justify-content: center;
  width: 27px;
  margin: 0 3px;
}

.app svg {
  width: 16px;
  height: 16px;
}

.app.open {
  box-shadow: inset 0 -2px #8fbbe2;
}

.app.active {
  width: 33px;
  margin: 0;
  background-color: #333;
}

.tray {
  display: flex;
  align-items: center;
  gap: 4px;
  margin-left: auto;
  padding-right: 15px;
}

.tray svg {
  width: 12px;
  height: 12px;
}

.tray button svg {
  width: 14px;
  height: 14px;
}

.ime {
  width: 12px;
  font-family: 'Open Sans', sans-serif;
  font-size: 12px;
  text-align: center;
}

.clock {
  padding: 0 5px 0 2px;
  font-family: 'Open Sans', sans-serif;
  font-size: 8px;
  line-height: 12px;
  text-align: center;
}
```

FILE: chart.js
```javascript
const svg = document.getElementById('chart');
const NS = 'http://www.w3.org/2000/svg';

const STEP = 32 / 3;
const LEFT = 3;
const RIGHT = 992;
const ZERO = 266; // ligne zéro du MACD

const barX = i => 7.5 + i * STEP;

// haut, sommet du corps, bas du corps, bas, plein (1) ou creux (0)
const candles = [
  [42, 48, 73, 78, 0], [46, 46, 60, 60, 1], [51, 52, 62, 67, 0], [48, 48, 54, 63, 0],
  [44, 49, 53, 62, 1], [44, 51, 53, 54, 1], [47, 51, 55, 65, 0], [49, 50, 55, 58, 1],
  [38, 38, 56, 56, 0], [38, 38, 57, 57, 1], [38, 38, 57, 57, 1], [46, 55, 57, 59, 1],
  [55, 55, 57, 66, 0], [50, 56, 57, 61, 0], [49, 53, 57, 59, 0], [51, 54, 57, 65, 1],
  [46, 52, 59, 70, 0], [51, 51, 77, 79, 1], [77, 78, 81, 104, 1], [78, 80, 88, 93, 1],
  [79, 82, 89, 93, 0], [65, 69, 83, 83, 0], [43, 50, 69, 75, 0], [50, 50, 87, 105, 1],
  [84, 86, 87, 88, 0], [73, 80, 84, 90, 0], [74, 79, 82, 84, 1], [76, 81, 82, 85, 0],
  [65, 70, 82, 83, 0], [60, 61, 72, 73, 0], [53, 56, 63, 67, 0], [51, 55, 59, 61, 1],
  [55, 58, 61, 64, 1], [31, 36, 63, 65, 0], [31, 36, 62, 65, 0], [32, 38, 40, 42, 1],
  [25, 25, 39, 41, 0], [24, 26, 35, 35, 1], [30, 33, 33, 38, 0], [28, 31, 41, 48, 1],
  [39, 40, 63, 63, 1], [62, 64, 78, 86, 1], [58, 62, 77, 80, 0], [58, 61, 87, 95, 1],
  [81, 87, 96, 101, 1], [84, 94, 98, 104, 1], [76, 92, 96, 101, 0], [80, 81, 93, 94, 0],
  [75, 83, 92, 93, 1], [89, 93, 98, 104, 1], [89, 97, 104, 105, 1], [93, 102, 110, 110, 1],
  [108, 110, 112, 116, 1], [106, 112, 114, 115, 1], [105, 106, 112, 113, 0], [133, 159, 177, 177, 1],
  [161, 169, 176, 179, 1], [160, 175, 175, 181, 0], [161, 174, 179, 180, 1], [179, 180, 190, 206, 1],
  [183, 187, 191, 202, 0], [180, 186, 189, 193, 0], [182, 187, 195, 204, 1], [182, 188, 195, 202, 0],
  [137, 146, 188, 190, 0], [121, 122, 148, 155, 0], [112, 123, 128, 129, 1], [118, 128, 134, 135, 1],
  [126, 132, 139, 149, 1], [78, 96, 139, 156, 0], [73, 77, 95, 111, 0], [50, 66, 76, 79, 0],
  [57, 60, 68, 73, 0], [46, 53, 60, 61, 0]
];

const macd = [
  12, 17, 19, 19, 20, 21, 21, 21, 19, 19, 20, 20, 19, 19, 18, 18, 17, 20, 23, 27,
  28, 27, 21, 24, 26, 25, 26, 25, 22, 18, 14, 11, 8, 2, -4, -7, -11, -14, -16, -16,
  -12, -5, -2, 4, 11, 16, 20, 19, 21, 24, 27, 29, 32, 33, 33, 46, 55, 62, 67, 72,
  75, 77, 78, 77, 68, 55, 45, 39, 33, 21, 8, -6, -16, -27
];

// une valeur toutes les deux barres
const signal = [
  -6, 2, 10, 15, 19, 20, 20, 20, 19, 19, 21, 23, 24, 26, 25, 22, 19, 13, 6, -2,
  -7, -9, -6, 0, 8, 16, 22, 27, 34, 43, 53, 63, 70, 70, 61, 47, 27, 17
];

const prices = [['123.50', 28], ['123.25', 53], ['123.00', 78], ['122.75', 102], ['122.50', 128], ['122.25', 152], ['122.00', 177], ['121.75', 202]];

const times = [
  [4, '14 4 03:00'], [8, '14 4 07:00'], [12, '14 4 11:00'], [16, '14 4 15:00'], [20, '14 4'],
  [28, '15 4 03:00'], [32, '15 4 07:00'], [36, '15 4 11:00'], [40, '15 4 15:00'], [44, '15 4 19:00'],
  [48, '15 4 23:00'], [52, '16 4 03:00'], [56, '18 4 08:00'], [60, '18 4 12:00'], [64, '18 4 16:00'],
  [68, '18 4 20:00'], [72, '19 4 00:00']
];

function add(tag, attrs, content) {
  const el = document.createElementNS(NS, tag);
  for (const key in attrs) el.setAttribute(key, attrs[key]);
  if (content) el.textContent = content;
  svg.appendChild(el);
}

function line(x1, y1, x2, y2, stroke, dash) {
  add('line', { x1, y1, x2, y2, stroke, 'stroke-dasharray': dash || 'none' });
}

function box(x, y, width, height, fill, stroke) {
  add('rect', { x, y, width, height, fill, stroke: stroke || 'none' });
}

function label(x, y, content, cls) {
  add('text', { x, y, class: cls || '' }, content);
}

// Grille
for (let i = 0; barX(i) < RIGHT; i += 2) {
  line(barX(i), 5, barX(i), 355, '#1e1b40', '2 2');
}
[25, 49, 55, 72].forEach(i => line(barX(i), 5, barX(i), 355, '#33307a', '2 2'));
prices.forEach(([, y]) => line(LEFT, y + 0.5, RIGHT, y + 0.5, '#1e1b40', '3 2'));
line(LEFT, 53.5, RIGHT, 53.5, '#3a2f80');
line(LEFT, ZERO, RIGHT, ZERO, '#1e1b40', '3 2');

// Volumes et bougies
candles.forEach(([high, top, bottom, low, full], i) => {
  const x = barX(i);
  if (i !== 54) line(x, 209, x, 226, '#1c741c');
  line(x, high, x, top, '#00a400');
  line(x, bottom, x, low, '#00a400');
  if (bottom - top < 2) {
    line(x - 3, top + 0.5, x + 3, top + 0.5, '#00c400');
  } else {
    box(x - 2.7, top + 0.5, 5.4, bottom - top - 0.5, full ? '#fff' : '#000', full ? '#00dc00' : '#00a400');
  }
});

// MACD
macd.forEach((v, i) => {
  box(barX(i) - 3, Math.min(ZERO, ZERO + v), 6, Math.abs(v), '#00ffff');
});
add('polyline', {
  points: signal.map((v, i) => barX(Math.min(i * 2, 73)) + ',' + (ZERO + v)).join(' '),
  fill: 'none', stroke: '#b80000', 'stroke-dasharray': '2 2'
});

// Cadres
line(0, 0.5, 1024, 0.5, '#3a3a3a');
line(LEFT, 4, RIGHT, 4, '#808080');
line(LEFT + 0.5, 4, LEFT + 0.5, 355, '#808080');
line(RIGHT - 0.5, 4, RIGHT - 0.5, 355, '#999');
line(LEFT, 355.5, RIGHT, 355.5, '#999');
box(LEFT, 225, RIGHT - LEFT, 4, '#6c6868');

// Trades
line(18, 51, 264, 87, '#d0c400');
line(487, 90, 701, 139, '#d0c400');
[[18, 51, '#f0e000'], [487, 90, '#d0c400'], [264, 87, '#e00000'], [701, 139, '#e00000']].forEach(([cx, cy, stroke]) => {
  add('circle', { cx, cy, r: 3, fill: 'none', stroke });
});
line(18.5, 15, 18.5, 356, '#e00000');
line(263.5, 5, 263.5, 356, '#e00000');
label(22, 47, 'Sell', 'sell');
label(267, 97, 'Buy', 'buy');
label(491, 86, 'Sell', 'sell');
label(704, 149, 'Buy', 'buy');

label(6, 13, 'EURJPY、H1、セル: 25、スケール: 100 %');
label(5, 236, 'MACD (12, 26, 9, Close)');

// Échelle des prix
prices.forEach(([text, y]) => {
  line(RIGHT, y + 0.5, RIGHT + 2, y + 0.5, '#999');
  if (text === '123.25') box(995, y - 5, 24, 10, '#fff');
  label(996, y + 3, text, text === '123.25' ? 'dark' : '');
});
label(996, 236, '0.1584');
box(995, 235, 23, 9, '#00ffff');
label(996, 242, '0.1098', 'dark');
label(996, 268, '0');
box(995, 278, 26, 10, '#ff0000');
label(996, 285, '-0.0728', 'light');
label(996, 352, '-0.3757');

// Échelle du temps
times.forEach(([i, text]) => {
  line(barX(i), 356, barX(i), 358, '#999');
  label(barX(i), 364, text, 'time');
});
box(0, 357, 47, 10, '#ff0000');
label(0, 365, '16.04.14 00:00', 'light');
box(235, 357, 57, 10, '#ff0000');
label(236, 365, '2016.04.14 23:00', 'light');

add('ellipse', { cx: 697.5, cy: 324, rx: 20, ry: 24, fill: 'none', stroke: '#ed1c24', 'stroke-width': 2 });
```
